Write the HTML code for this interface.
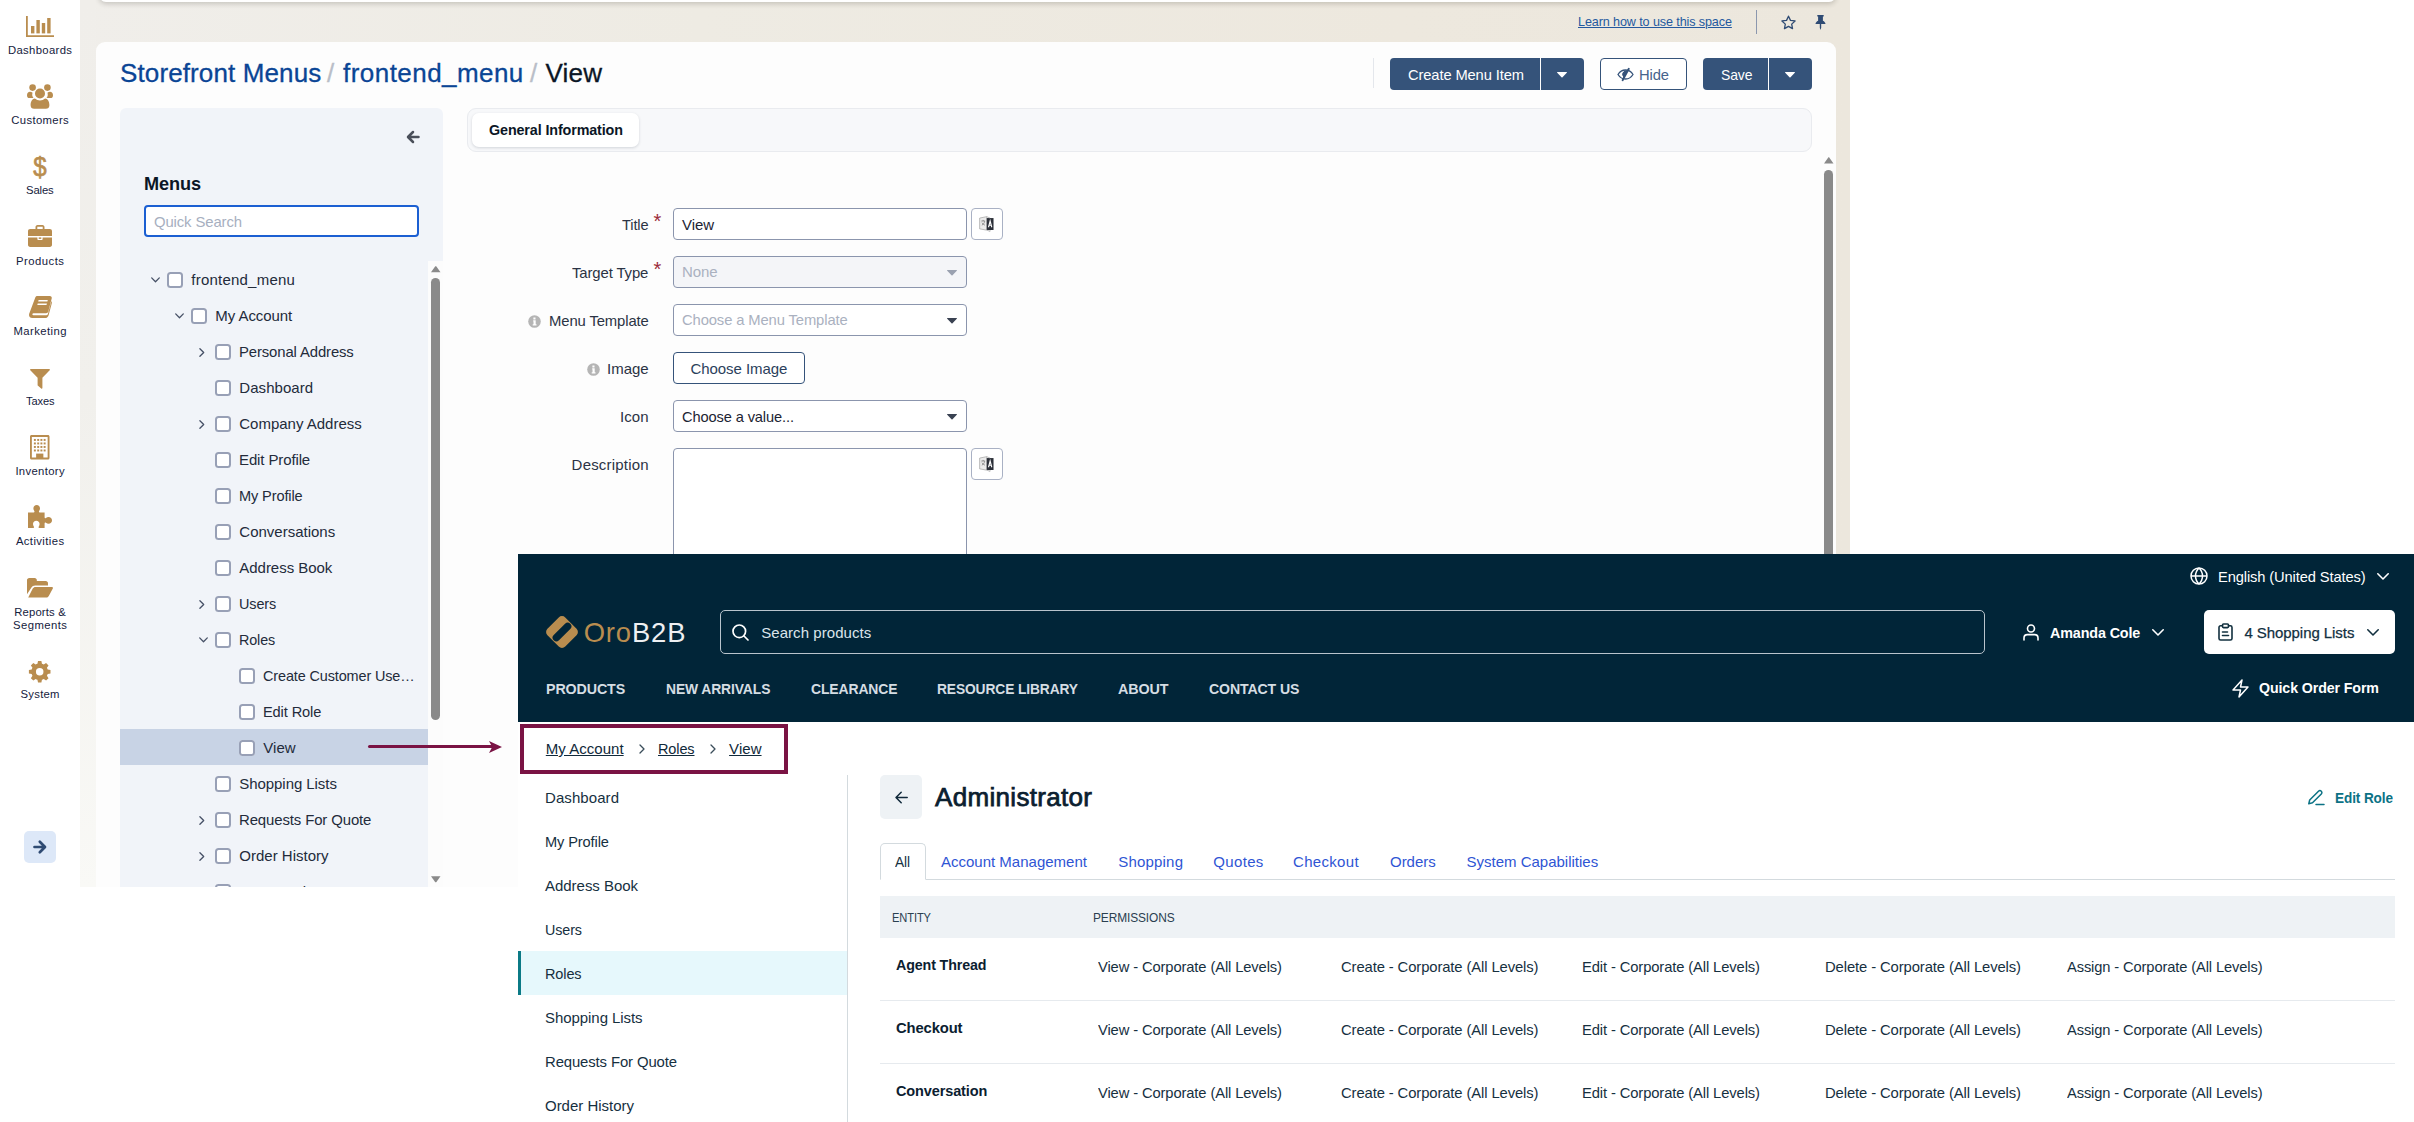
<!DOCTYPE html>
<html lang="en">
<head>
<meta charset="utf-8">
<title>Storefront Menus - frontend_menu - View</title>
<style>
*{box-sizing:border-box;margin:0;padding:0}
html,body{width:2414px;height:1122px;overflow:hidden;background:#fff}
body{position:relative;font-family:"Liberation Sans",sans-serif;color:#1c2433;font-size:15px}
.abs{position:absolute}
.t{position:absolute;white-space:nowrap;line-height:20px}
svg{position:absolute;overflow:visible}
#admin{position:absolute;left:0;top:0;width:1850px;height:887px;overflow:hidden;background:linear-gradient(90deg,#f0eeea 80px,#eeebe3 700px,#ede8de 1400px,#ece7dd 1850px)}
#side{position:absolute;left:0;top:0;width:80px;height:887px;background:#fff}
#side svg{fill:#b98d4f}
.lbl{position:absolute;white-space:nowrap;line-height:14px;color:#14213d}
#topbar{position:absolute;left:99px;top:-6px;width:1737px;height:8px;background:#fff;border-radius:0 0 7px 7px;box-shadow:0 2px 5px rgba(40,35,25,.2)}
#panel{position:absolute;left:96px;top:42px;width:1740px;height:860px;background:#fdfdfd;border-radius:9px 9px 0 0}
#edgegrad{position:absolute;left:80px;top:0;width:16px;height:887px;background:linear-gradient(180deg,#f0eeea 0%,#f1f0ec 45%,#f9f9f6 100%)}
.btn{position:absolute;top:58px;height:32px;background:#35537a}
.cb{position:absolute;width:16px;height:16px;border-radius:3.500px;background:#fff;box-shadow:inset 0 0 0 2px #98a0b6}
.chev{stroke:#465066;stroke-width:1.300;fill:none;stroke-linecap:round;stroke-linejoin:round}
.inp{position:absolute;left:673px;width:294px;height:32px;border:1px solid #8b95ad;border-radius:4px;background:#fff}
.tbtn{position:absolute;left:971px;width:32px;height:32px;border:1px solid #a9b1c4;border-radius:4px;background:#fff}
#store{position:absolute;left:518px;top:554px;width:1896px;height:568px;background:#fff;overflow:hidden}
#hdr{position:absolute;left:0;top:0;width:1896px;height:168px;background:#012538}
.sep{position:absolute;left:362px;width:1515px;height:1px;background:#e6eaee}
</style>
</head>
<body>
<div id="admin">
<div id="edgegrad"></div>
<div id="topbar"></div>
<div id="panel"></div>
<div class="t" style="left:1578px;top:12px;font-size:12.6px;color:#24599f;letter-spacing:-0.11px;text-decoration:underline;">Learn how to use this space</div>
<div class="abs" style="left:1756px;top:10px;width:1px;height:24px;background:#8b97ae"></div>
<svg style="left:1780.5px;top:14.5px;fill:none;stroke:#2f4b73;stroke-width:1.4;stroke-linejoin:round" width="15" height="14.5" viewBox="0 0 16 15"><path d="M8 1l2.100 4.500 4.900.6-3.600 3.400.9 4.800L8 11.900l-4.300 2.400.9-4.800L1 6.100l4.900-.6z"/></svg>
<svg style="left:1814.5px;top:15px;fill:#2f4b73" width="11" height="15" viewBox="0 0 11 15"><path d="M2.300 0h6.400v1.500H7.900v4.200c1.500.7 2.500 1.900 2.600 3.400H6.200v3.700L5.500 15l-.7-2.200V9.100H.5c.1-1.500 1.100-2.700 2.600-3.400V1.500H2.300z"/></svg>
<div class="t" style="left:120px;top:56px;font-size:26px;line-height:34px;-webkit-text-stroke:.3px"><span style="color:#0a4595;letter-spacing:.12px">Storefront Menus</span><span style="color:#b9bec8;margin:0 1.5px 0 -1.500px"> / </span><span style="color:#0a4595;letter-spacing:.45px">frontend_menu</span><span style="color:#b9bec8;margin:0 1px 0 -1px"> / </span><span style="color:#0b1626;letter-spacing:.2px">View</span></div>
<div class="abs" style="left:1373px;top:58px;width:1px;height:30px;background:#e4e7ec"></div>
<div class="btn" style="left:1390px;width:150px;border-radius:4px 0 0 4px"></div>
<div class="t" style="left:1408px;top:65px;font-size:14.8px;color:#fff;letter-spacing:-0.12px;transform:scaleX(0.9944);transform-origin:0 0;">Create Menu Item</div>
<div class="btn" style="left:1541px;width:43px;border-radius:0 4px 4px 0"></div>
<svg style="left:1557px;top:71.5px;fill:#fff" width="10" height="5.500" viewBox="0 0 10 5.500"><path d="M.5 0h9c.4 0 .6.500.3.800L5.500 5.300c-.3.300-.7.300-1 0L.2.800C-.1.500.1 0 .5 0z"/></svg>
<div class="abs" style="left:1600px;top:58px;width:87px;height:32px;border:1px solid #35537a;border-radius:4px;background:#fff"></div>
<svg style="left:1617px;top:68px;fill:none;stroke:#35537a;stroke-width:1.3;stroke-linecap:round" width="17" height="13" viewBox="0 0 17 13"><path d="M1 6.500c1.800-3 4.300-4.500 7.500-4.500S14.200 3.500 16 6.500c-1.800 3-4.300 4.500-7.500 4.500S2.800 9.500 1 6.500z"/><path d="M5.800 7c0-1.800 1.200-3 2.900-3.100"/><path d="M11.800.8 5.600 12.200" stroke-width="1.900"/><path d="M6.300 10.700 8 7.500l3-5.300-3.500.300-1.800 3z" fill="#35537a" stroke="none"/></svg>
<div class="t" style="left:1639px;top:65px;font-size:14.8px;color:#46638c;letter-spacing:-0.12px;transform:scaleX(0.9974);transform-origin:0 0;">Hide</div>
<div class="btn" style="left:1703px;width:65px;border-radius:4px 0 0 4px"></div>
<div class="t" style="left:1720.5px;top:65px;font-size:14.8px;color:#fff;letter-spacing:-0.12px;transform:scaleX(0.9439);transform-origin:0 0;">Save</div>
<div class="btn" style="left:1769px;width:43px;border-radius:0 4px 4px 0"></div>
<svg style="left:1785px;top:71.5px;fill:#fff" width="10" height="5.500" viewBox="0 0 10 5.500"><path d="M.5 0h9c.4 0 .6.500.3.800L5.500 5.300c-.3.300-.7.300-1 0L.2.800C-.1.500.1 0 .5 0z"/></svg>
<div class="abs" style="left:120px;top:108px;width:323px;height:790px;background:#f1f4f9;border-radius:6px 6px 0 0"></div>
<div class="abs" style="left:428px;top:261px;width:15px;height:640px;background:#fcfcfc"></div>
<svg style="left:405.500px;top:130px;fill:none;stroke:#4a4f5a;stroke-width:2.500;stroke-linecap:round;stroke-linejoin:round" width="14" height="14" viewBox="0 0 14 14"><path d="M12.500 7H3M7 2 2 7l5 5"/></svg>
<div class="t" style="left:144px;top:173px;font-size:18.5px;line-height:22px;font-weight:bold;color:#0b1626;letter-spacing:-0.12px;transform:scaleX(0.9809);transform-origin:0 0;font-weight:bold;">Menus</div>
<div class="abs" style="left:144px;top:205px;width:275px;height:32px;border:2px solid #1b5fd2;border-radius:4px;background:#fff"></div>
<div class="t" style="left:153.5px;top:212px;font-size:15px;color:#a7afbf;letter-spacing:-0.12px;transform:scaleX(0.9919);transform-origin:0 0;">Quick Search</div>
<svg class="chev" style="left:150.5px;top:277px" width="9" height="6" viewBox="0 0 9 6"><path d="M.7.900 4.500 4.700 8.300.900"/></svg>
<div class="cb" style="left:167px;top:272px"></div><div class="t" style="left:191.3px;top:270px;font-size:15px;color:#232b3b;letter-spacing:0.22px;">frontend_menu</div>
<svg class="chev" style="left:174.5px;top:313px" width="9" height="6" viewBox="0 0 9 6"><path d="M.7.900 4.500 4.700 8.300.900"/></svg>
<div class="cb" style="left:191px;top:308px"></div><div class="t" style="left:215.3px;top:306px;font-size:15px;color:#232b3b;letter-spacing:-0.06px;">My Account</div>
<svg class="chev" style="left:199px;top:347.5px" width="6" height="9" viewBox="0 0 6 9"><path d="M.9.700 4.700 4.500.900 8.300"/></svg>
<div class="cb" style="left:215px;top:344px"></div><div class="t" style="left:239.3px;top:342px;font-size:15px;color:#232b3b;letter-spacing:-0.12px;transform:scaleX(0.9916);transform-origin:0 0;">Personal Address</div>
<div class="cb" style="left:215px;top:380px"></div><div class="t" style="left:239.3px;top:378px;font-size:15px;color:#232b3b;letter-spacing:0.06px;">Dashboard</div>
<svg class="chev" style="left:199px;top:419.5px" width="6" height="9" viewBox="0 0 6 9"><path d="M.9.700 4.700 4.500.900 8.300"/></svg>
<div class="cb" style="left:215px;top:416px"></div><div class="t" style="left:239.3px;top:414px;font-size:15px;color:#232b3b;letter-spacing:-0.01px;">Company Address</div>
<div class="cb" style="left:215px;top:452px"></div><div class="t" style="left:239.3px;top:450px;font-size:15px;color:#232b3b;letter-spacing:-0.12px;transform:scaleX(0.9998);transform-origin:0 0;">Edit Profile</div>
<div class="cb" style="left:215px;top:488px"></div><div class="t" style="left:239.3px;top:486px;font-size:15px;color:#232b3b;letter-spacing:-0.12px;transform:scaleX(0.9710);transform-origin:0 0;">My Profile</div>
<div class="cb" style="left:215px;top:524px"></div><div class="t" style="left:239.3px;top:522px;font-size:15px;color:#232b3b;letter-spacing:0px;">Conversations</div>
<div class="cb" style="left:215px;top:560px"></div><div class="t" style="left:239.3px;top:558px;font-size:15px;color:#232b3b;letter-spacing:-0.03px;">Address Book</div>
<svg class="chev" style="left:199px;top:599.5px" width="6" height="9" viewBox="0 0 6 9"><path d="M.9.700 4.700 4.500.900 8.300"/></svg>
<div class="cb" style="left:215px;top:596px"></div><div class="t" style="left:239.3px;top:594px;font-size:15px;color:#232b3b;letter-spacing:-0.12px;transform:scaleX(0.9615);transform-origin:0 0;">Users</div>
<svg class="chev" style="left:198.5px;top:637px" width="9" height="6" viewBox="0 0 9 6"><path d="M.7.900 4.500 4.700 8.300.900"/></svg>
<div class="cb" style="left:215px;top:632px"></div><div class="t" style="left:239.3px;top:630px;font-size:15px;color:#232b3b;letter-spacing:-0.12px;transform:scaleX(0.9559);transform-origin:0 0;">Roles</div>
<div class="cb" style="left:239px;top:668px"></div><div class="t" style="left:263.3px;top:666px;font-size:15px;color:#232b3b;letter-spacing:-0.12px;transform:scaleX(0.9615);transform-origin:0 0;">Create Customer Use…</div>
<div class="cb" style="left:239px;top:704px"></div><div class="t" style="left:263.3px;top:702px;font-size:15px;color:#232b3b;letter-spacing:-0.12px;transform:scaleX(0.9732);transform-origin:0 0;">Edit Role</div>
<div class="abs" style="left:120px;top:729px;width:308px;height:36px;background:#c8d3e5"></div>
<div class="cb" style="left:239px;top:740px"></div><div class="t" style="left:263.3px;top:738px;font-size:15px;color:#232b3b;letter-spacing:0.02px;">View</div>
<div class="cb" style="left:215px;top:776px"></div><div class="t" style="left:239.3px;top:774px;font-size:15px;color:#232b3b;letter-spacing:-0.06px;">Shopping Lists</div>
<svg class="chev" style="left:199px;top:815.5px" width="6" height="9" viewBox="0 0 6 9"><path d="M.9.700 4.700 4.500.900 8.300"/></svg>
<div class="cb" style="left:215px;top:812px"></div><div class="t" style="left:239.3px;top:810px;font-size:15px;color:#232b3b;letter-spacing:-0.12px;transform:scaleX(0.9953);transform-origin:0 0;">Requests For Quote</div>
<svg class="chev" style="left:199px;top:851.5px" width="6" height="9" viewBox="0 0 6 9"><path d="M.9.700 4.700 4.500.900 8.300"/></svg>
<div class="cb" style="left:215px;top:848px"></div><div class="t" style="left:239.3px;top:846px;font-size:15px;color:#232b3b;letter-spacing:0px;">Order History</div>
<div class="cb" style="left:215px;top:884px"></div><div class="t" style="left:239.3px;top:882px;font-size:15px;color:#232b3b;letter-spacing:0.13px;">Open Orders</div>
<svg style="left:430.500px;top:266px;fill:#8a8a8a" width="9.500" height="7" viewBox="0 0 10 7"><path d="M5 0c.3 0 .5.100.7.400L10 6.500H0L4.300.4C4.500.1 4.700 0 5 0z"/></svg>
<div class="abs" style="left:431px;top:278px;width:9px;height:442px;border-radius:4.500px;background:#8a8a8a"></div>
<svg style="left:430.500px;top:876px;fill:#8a8a8a" width="9.500" height="7" viewBox="0 0 10 7"><path d="M0 0h10L5.700 6.100c-.4.500-1 .5-1.400 0z"/></svg>
<div class="abs" style="left:367.500px;top:745px;width:126px;height:3px;border-radius:1.500px;background:#7a1344"></div>
<svg style="left:488.500px;top:740.500px;fill:#7a1344" width="13" height="12" viewBox="0 0 13 12"><path d="M0 0 13 6 0 12 3.200 6z"/></svg>
<div class="abs" style="left:467px;top:108px;width:1345px;height:44px;border:1px solid #e9ebef;border-radius:9px;background:#f7f8fa"></div>
<div class="abs" style="left:472px;top:113px;width:167px;height:34px;border-radius:7px;background:#fff;box-shadow:0 1px 3px rgba(20,30,50,.16)"></div>
<div class="t" style="left:488.5px;top:120px;font-size:14.5px;font-weight:bold;color:#0b1626;letter-spacing:-0.12px;transform:scaleX(0.9881);transform-origin:0 0;">General Information</div>
<svg style="left:1823.500px;top:157px;fill:#8a8a8a" width="9.500" height="7.300" viewBox="0 0 10 7"><path d="M5 0c.3 0 .5.100.7.400L10 6.500H0L4.300.4C4.500.1 4.700 0 5 0z"/></svg>
<div class="abs" style="left:1824px;top:170px;width:9px;height:420px;border-radius:4.500px;background:#8a8a8a"></div>
<div class="t" style="left:622px;top:215px;font-size:15px;color:#2b3344;letter-spacing:-0.12px;transform:scaleX(0.9743);transform-origin:0 0;">Title</div>
<div class="abs" style="left:653.5px;top:211px;font-size:20px;line-height:20px;color:#9b2c3a">*</div>
<div class="inp" style="top:208px"></div>
<div class="t" style="left:682px;top:215px;font-size:15px;color:#1c2433;letter-spacing:-0.08px;">View</div>
<div class="tbtn" style="top:208px"></div>
<div class="t" style="left:572.2px;top:263px;font-size:15px;color:#2b3344;letter-spacing:-0.12px;transform:scaleX(0.9934);transform-origin:0 0;">Target Type</div>
<div class="abs" style="left:653.5px;top:259px;font-size:20px;line-height:20px;color:#9b2c3a">*</div>
<div class="inp" style="top:256px;background:#f4f5f8"></div>
<div class="t" style="left:682px;top:262px;font-size:15px;color:#aab1c0;letter-spacing:-0.12px;">None</div>
<svg style="left:946.500px;top:270.3px;fill:#9aa1b0" width="10" height="5.500" viewBox="0 0 10 5.500"><path d="M.5 0h9c.4 0 .6.500.3.800L5.500 5.300c-.3.300-.7.300-1 0L.2.800C-.1.500.1 0 .5 0z"/></svg>
<div class="t" style="left:548.8px;top:311px;font-size:15px;color:#2b3344;letter-spacing:-0.12px;transform:scaleX(0.9897);transform-origin:0 0;">Menu Template</div>
<div class="inp" style="top:304px"></div>
<div class="t" style="left:682px;top:310px;font-size:15px;color:#aab1c0;letter-spacing:-0.12px;transform:scaleX(0.9855);transform-origin:0 0;">Choose a Menu Template</div>
<svg style="left:946.500px;top:318.3px;fill:#3a4252" width="10" height="5.500" viewBox="0 0 10 5.500"><path d="M.5 0h9c.4 0 .6.500.3.800L5.500 5.300c-.3.300-.7.300-1 0L.2.800C-.1.500.1 0 .5 0z"/></svg>
<div class="t" style="left:607.1px;top:359px;font-size:15px;color:#2b3344;letter-spacing:-0.05px;">Image</div>
<div class="abs" style="left:673px;top:352px;width:132px;height:32px;border:1.500px solid #35537a;border-radius:4px;background:#fff"></div>
<div class="t" style="left:690.5px;top:359px;font-size:15px;color:#2b3f5c;letter-spacing:-0.07px;">Choose Image</div>
<div class="t" style="left:619.9px;top:407px;font-size:15px;color:#2b3344;letter-spacing:0.12px;">Icon</div>
<div class="inp" style="top:400px"></div>
<div class="t" style="left:682px;top:407px;font-size:15px;color:#1c2433;letter-spacing:-0.12px;transform:scaleX(0.9754);transform-origin:0 0;">Choose a value...</div>
<svg style="left:946.500px;top:414.3px;fill:#3a4252" width="10" height="5.500" viewBox="0 0 10 5.500"><path d="M.5 0h9c.4 0 .6.500.3.800L5.500 5.300c-.3.300-.7.300-1 0L.2.800C-.1.500.1 0 .5 0z"/></svg>
<div class="t" style="left:571.6px;top:455px;font-size:15px;color:#2b3344;letter-spacing:0.2px;">Description</div>
<div class="inp" style="top:448px;height:130px"></div>
<div class="tbtn" style="top:448px"></div>
<svg style="left:528px;top:314.5px" width="13" height="13" viewBox="0 0 13 13"><circle cx="6.500" cy="6.500" r="6.300" fill="#b5b5b5"/><path d="M5.200 5.300h2.500v4h.8v1.200H4.700V9.300h.8V6.500h-.3zM5.400 2.500h2.100v1.900H5.400z" fill="#fff"/></svg>
<svg style="left:586.5px;top:362.5px" width="13" height="13" viewBox="0 0 13 13"><circle cx="6.500" cy="6.500" r="6.300" fill="#b5b5b5"/><path d="M5.200 5.300h2.500v4h.8v1.200H4.700V9.300h.8V6.500h-.3zM5.400 2.500h2.100v1.900H5.400z" fill="#fff"/></svg>
<svg style="left:978.300px;top:215.3px" width="17.500" height="17.500" viewBox="0 0 16 16"><path d="M1.500 2.800 8 1.500v12.300l-6.500-1.100z" fill="#ececec" stroke="#9a9a9a" stroke-width=".6"/><path d="M8 2.800h6.200v10.900H8z" fill="#2b2f38"/><path d="M9.600 11.200 11.100 5.500l1.500 5.700M10.100 9.400h2" stroke="#fff" stroke-width="1" fill="none"/><path d="M3 5.500h3.500M4.700 4.500v1M3.500 9.300c1.500-.8 2.300-2 2.600-3.600M3.600 7c.6 1 1.500 1.800 2.700 2.300" stroke="#777" stroke-width=".7" fill="none"/><path d="M8 1.500l3 1.300M8 13.800l3 1.200V13.700" stroke="#9a9a9a" stroke-width=".6" fill="none"/></svg>
<svg style="left:978.300px;top:455.3px" width="17.500" height="17.500" viewBox="0 0 16 16"><path d="M1.500 2.800 8 1.500v12.300l-6.500-1.100z" fill="#ececec" stroke="#9a9a9a" stroke-width=".6"/><path d="M8 2.800h6.200v10.900H8z" fill="#2b2f38"/><path d="M9.600 11.200 11.100 5.500l1.500 5.700M10.100 9.400h2" stroke="#fff" stroke-width="1" fill="none"/><path d="M3 5.500h3.500M4.700 4.500v1M3.500 9.300c1.500-.8 2.300-2 2.600-3.600M3.600 7c.6 1 1.500 1.800 2.700 2.300" stroke="#777" stroke-width=".7" fill="none"/><path d="M8 1.500l3 1.300M8 13.800l3 1.200V13.700" stroke="#9a9a9a" stroke-width=".6" fill="none"/></svg>
<div id="side">
<!-- Dashboards: bar chart -->
    <svg style="left:26px;top:16px" width="28" height="22" viewBox="0 0 28 22"><path d="M0 0h1.8v19.2H28V21H0z"/><rect x="5" y="10" width="3.4" height="7.4"/><rect x="10.4" y="4" width="3.4" height="13.4"/><rect x="15.8" y="7" width="3.4" height="10.4"/><rect x="21.2" y="2" width="3.4" height="15.4"/></svg>
    <!-- Customers: users -->
    <svg style="left:27px;top:84px" width="26" height="25" viewBox="0 0 26 25"><circle cx="5.6" cy="3.6" r="3.3"/><circle cx="20.4" cy="3.6" r="3.3"/><path d="M0 11.2c0-2.2 1.2-3.4 3-3.4 1 0 1.7.3 2.6.9-.4 1-.5 2.3-.1 3.6.3.8.6 1.3 1 1.8H2.6C.9 14.100 0 13.200 0 11.200z"/><path d="M26 11.2c0-2.2-1.2-3.4-3-3.4-1 0-1.7.3-2.6.9.4 1 .5 2.3.1 3.600-.3.8-.6 1.300-1 1.800h3.9c1.700 0 2.600-.9 2.600-2.900z"/><circle cx="13" cy="9.500" r="5"/><path d="M3.600 21.200c0-3.800 1.700-6.300 4.300-6.600 1.500 1.200 3.200 1.900 5.100 1.900s3.600-.7 5.100-1.900c2.600.3 4.300 2.800 4.300 6.600 0 2.300-1.400 3.600-3.500 3.600H7.100c-2.100 0-3.500-1.300-3.500-3.600z"/></svg>
    <!-- Sales: dollar -->
    <div class="abs" style="left:20px;top:150.500px;width:40px;text-align:center;font-size:28px;line-height:32px;color:#b98d4f;-webkit-text-stroke:.7px #b98d4f;transform:scaleX(.86)">$</div>
    <!-- Products: briefcase -->
    <svg style="left:28px;top:225px" width="24" height="22" viewBox="0 0 24 22"><path d="M7.500 4V2.200C7.500 1 8.300 0 9.500 0h5c1.200 0 2 1 2 2.200V4h5.300C23.100 4 24 4.900 24 6.200V11H0V6.200C0 4.900.9 4 2.200 4zm1.800 0h5.400V1.800H9.300z"/><path d="M0 12.400h9.400v1.900c0 .5.300.8.800.8h3.600c.5 0 .8-.3.800-.8v-1.900H24v7.400c0 1.300-.9 2.200-2.200 2.200H2.200C.9 22 0 21.100 0 19.800z"/><rect x="10.700" y="12.400" width="2.600" height="1.500"/></svg>
    <!-- Marketing: book -->
    <svg style="left:29px;top:296px" width="23" height="22" viewBox="0 0 23 22"><path d="M6.200 1.700C6.500.6 7.300 0 8.400 0h12.300c1.500 0 2.400 1.100 2 2.600l-3.400 13c-.3 1.100-1.100 1.700-2.200 1.700H4.500c-.6 0-1 .3-1.100.800-.2.700.2 1.200 1 1.200h12.900c.8 0 1.300-.4 1.600-1.200L22.400 5c.5.600.6 1.300.4 2.200l-3.100 11.700c-.500 1.900-1.800 3.100-3.700 3.100H3.400C1 22-.4 20.100.100 17.900zM9.600 4.100l-.4 1.500h9.200l.4-1.500zm-.9 3.300-.4 1.500h9.200l.4-1.500z" fill-rule="evenodd"/></svg>
    <!-- Taxes: filter -->
    <svg style="left:30px;top:369px" width="20" height="20" viewBox="0 0 20 20"><path d="M.8 0h18.400c.7 0 1 .8.500 1.300L12.400 8.700V19c0 .7-.7 1-1.200.600L8 16.800c-.3-.2-.4-.5-.4-.8V8.700L.3 1.300C-.2.800.1 0 .8 0z"/></svg>
    <!-- Inventory: building -->
    <svg style="left:30px;top:435px" width="19.500" height="24.500" viewBox="0 0 20 25"><path fill-rule="evenodd" d="M1.600 0h16.800C19.300 0 20 .7 20 1.600v21.800c0 .9-.7 1.600-1.600 1.600H1.600C.7 25 0 24.300 0 23.400V1.600C0 .7.700 0 1.600 0zm.3 1.900v21.200h16.200V1.900z"/><rect x="6.300" y="19" width="7.400" height="5"/><rect x="4" y="4" width="2" height="2"/><rect x="7.4" y="4" width="2" height="2"/><rect x="10.7" y="4" width="2" height="2"/><rect x="14" y="4" width="2" height="2"/><rect x="4" y="7.6" width="2" height="2"/><rect x="7.4" y="7.6" width="2" height="2"/><rect x="10.7" y="7.6" width="2" height="2"/><rect x="14" y="7.6" width="2" height="2"/><rect x="4" y="11.2" width="2" height="2"/><rect x="7.4" y="11.2" width="2" height="2"/><rect x="10.7" y="11.2" width="2" height="2"/><rect x="14" y="11.2" width="2" height="2"/><rect x="4" y="14.8" width="2" height="2"/><rect x="7.4" y="14.8" width="2" height="2"/><rect x="10.7" y="14.8" width="2" height="2"/><rect x="14" y="14.8" width="2" height="2"/></svg>
    <!-- Activities: puzzle -->
    <svg style="left:28px;top:505px" width="24" height="23" viewBox="0 0 24 23"><path d="M0 7.400h5.600c.8 0 1.100-.5.700-1.300C5.700 5.200 5.400 4.400 5.400 3.500 5.400 1.500 6.800 0 8.700 0s3.300 1.500 3.300 3.500c0 .9-.3 1.700-.9 2.600-.4.800-.1 1.300.7 1.300h4.800v4.900c0 .8.500 1.100 1.300.7.900-.6 1.700-.9 2.600-.9 2 0 3.500 1.400 3.500 3.300s-1.500 3.300-3.500 3.300c-.9 0-1.700-.3-2.600-.9-.8-.4-1.300-.1-1.300.7V23h-5.200c-.8 0-1.100-.5-.7-1.300.6-.9.900-1.700.9-2.600 0-2-1.400-3.300-3.300-3.300S5 17.100 5 19.100c0 .9.300 1.700.9 2.600.4.800.1 1.300-.7 1.300H0z"/></svg>
    <!-- Reports: folder open -->
    <svg style="left:26.700px;top:578px" width="26" height="19.500" viewBox="0 0 28 21"><path d="M0 2.400C0 1 1 0 2.400 0h5.800c1.400 0 2.400 1 2.400 2.400v.8h9.600c1.400 0 2.400 1 2.400 2.400V8H8.800c-1.800 0-3.200.8-4.200 2.400L0 17.600z"/><path d="M6.200 11.400c.7-1.200 1.600-1.800 2.900-1.800h17.800c1 0 1.400.8.900 1.700l-4.200 7.700c-.7 1.300-1.700 2-3.100 2H1.300z"/></svg>
    <!-- System: cog -->
    <svg style="left:29.400px;top:660.500px" width="21.400" height="21.600" viewBox="0 0 22 23"><path fill-rule="evenodd" d="M9.200 0h3.600l.6 3c.7.200 1.300.5 1.900.8l2.500-1.700 2.600 2.600-1.700 2.500c.4.600.6 1.300.8 1.900l3 .6v3.600l-3 .6c-.2.700-.5 1.300-.8 1.900l1.700 2.500-2.600 2.600-2.500-1.700c-.6.400-1.300.6-1.900.8l-.6 3H9.200l-.6-3c-.7-.2-1.300-.5-1.900-.8l-2.500 1.700-2.600-2.600 1.700-2.500c-.4-.6-.6-1.300-.8-1.900l-3-.6V9.700l3-.6c.2-.7.5-1.300.8-1.900L1.600 4.700l2.600-2.600 2.500 1.700c.6-.4 1.300-.6 1.900-.8zM11 7.500a4 4 0 1 0 0 8 4 4 0 0 0 0-8z"/></svg>
<div class="lbl" style="left:8px;top:43px;font-size:11.3px;line-height:14px;letter-spacing:0.34px;">Dashboards</div>
<div class="lbl" style="left:11.3px;top:113px;font-size:11.3px;line-height:14px;letter-spacing:0.35px;">Customers</div>
<div class="lbl" style="left:26.15px;top:183px;font-size:11.3px;line-height:14px;letter-spacing:-0.12px;transform:scaleX(0.9969);transform-origin:0 0;">Sales</div>
<div class="lbl" style="left:16.05px;top:254px;font-size:11.3px;line-height:14px;letter-spacing:0.47px;">Products</div>
<div class="lbl" style="left:13.55px;top:324px;font-size:11.3px;line-height:14px;letter-spacing:0.41px;">Marketing</div>
<div class="lbl" style="left:25.75px;top:394px;font-size:11.3px;line-height:14px;letter-spacing:-0.12px;transform:scaleX(0.9814);transform-origin:0 0;">Taxes</div>
<div class="lbl" style="left:15.4px;top:464px;font-size:11.3px;line-height:14px;letter-spacing:0.34px;">Inventory</div>
<div class="lbl" style="left:15.9px;top:534px;font-size:11.3px;line-height:14px;letter-spacing:0.4px;">Activities</div>
<div class="lbl" style="left:14.2px;top:605px;font-size:11.3px;line-height:14px;letter-spacing:0.17px;">Reports &amp;</div>
<div class="lbl" style="left:13px;top:618px;font-size:11.3px;line-height:14px;letter-spacing:0.45px;">Segments</div>
<div class="lbl" style="left:20.5px;top:687px;font-size:11.3px;line-height:14px;letter-spacing:0.27px;">System</div>
<div class="abs" style="left:24px;top:831px;width:32px;height:32px;border-radius:5px;background:#dde8f8"></div>
<svg style="left:33px;top:840px;fill:none;stroke:#2f4b73;stroke-width:2.700;stroke-linecap:round;stroke-linejoin:round" width="14" height="14" viewBox="0 0 14 14"><path d="M1.500 7h10M6.800 1.800 12 7l-5.200 5.200"/></svg>
</div>
</div>
<div id="store">
<div id="hdr">
<svg style="left:1672px;top:13px;fill:none;stroke:#fff;stroke-width:1.500" width="18" height="18" viewBox="0 0 18 18"><circle cx="9" cy="9" r="8"/><path d="M1 9h16M9 1c2.400 2.300 3.500 5 3.500 8S11.400 14.700 9 17M9 1C6.600 3.300 5.500 6 5.500 9S6.600 14.700 9 17"/></svg>
<div class="t" style="left:1699.6px;top:13px;font-size:15px;color:#fff;letter-spacing:-0.12px;transform:scaleX(0.9790);transform-origin:0 0;">English (United States)</div>
<svg style="left:1859px;top:19px;fill:none;stroke:#fff;stroke-width:1.600;stroke-linecap:round;stroke-linejoin:round" width="12" height="7" viewBox="0 0 12 7"><path d="M.8.800 6 6 11.200.8"/></svg>
<svg style="left:26.9px;top:60.8px" width="34" height="34" viewBox="0 0 34 34"><g transform="rotate(45 17 17)"><rect x="4.400" y="4.400" width="25.200" height="25.200" rx="4.600" fill="#b98d4f"/><rect x="13.300" y="5.300" width="7.400" height="23.400" rx="3.700" fill="#012538"/></g></svg>
<div class="t" style="left:65.7px;top:62px;font-size:27.4px;line-height:34px;letter-spacing:0.87px;"><span style="color:#b98d4f">Oro</span><span style="color:#eef0f2">B2B</span></div>
<div class="abs" style="left:202px;top:56px;width:1265px;height:44px;border:1px solid #b9c4cc;border-radius:5px"></div>
<svg style="left:213.5px;top:69.5px;fill:none;stroke:#fff;stroke-width:1.700;stroke-linecap:round" width="17" height="17" viewBox="0 0 17 17"><circle cx="7.300" cy="7.300" r="6.300"/><path d="M12 12l4 4"/></svg>
<div class="t" style="left:243.2px;top:69px;font-size:15px;color:#dbe4ea;letter-spacing:0.06px;">Search products</div>
<svg style="left:1505px;top:69.5px;fill:none;stroke:#fff;stroke-width:1.600;stroke-linecap:round" width="16" height="17" viewBox="0 0 16 17"><circle cx="8" cy="4.500" r="3.500"/><path d="M1 16v-2c0-2 1.400-3.400 3.400-3.400h7.200c2 0 3.400 1.400 3.400 3.400v2"/></svg>
<div class="t" style="left:1531.7px;top:69px;font-size:15px;font-weight:bold;color:#fff;letter-spacing:-0.12px;transform:scaleX(0.9540);transform-origin:0 0;">Amanda Cole</div>
<svg style="left:1634.3px;top:75px;fill:none;stroke:#fff;stroke-width:1.600;stroke-linecap:round;stroke-linejoin:round" width="12" height="7" viewBox="0 0 12 7"><path d="M.8.800 6 6 11.200.8"/></svg>
<div class="abs" style="left:1686px;top:56px;width:191px;height:44px;border-radius:5px;background:#fff"></div>
<svg style="left:1700.3px;top:69px;fill:none;stroke:#12303f;stroke-width:1.600;stroke-linecap:round;stroke-linejoin:round" width="15" height="18" viewBox="0 0 15 18"><path d="M4.500 2.800H2.600c-.9 0-1.600.7-1.600 1.600v11c0 .9.700 1.600 1.600 1.600h9.800c.9 0 1.600-.7 1.600-1.600v-11c0-.9-.7-1.600-1.600-1.600h-1.900"/><rect x="4.500" y="1" width="6" height="3.600" rx="1"/><path d="M4.500 9h5M4.500 12.500h6"/></svg>
<div class="t" style="left:1726.4px;top:69px;font-size:15px;color:#12303f;letter-spacing:-0.06px;-webkit-text-stroke:.25px;">4 Shopping Lists</div>
<svg style="left:1849.3px;top:75px;fill:none;stroke:#12303f;stroke-width:1.600;stroke-linecap:round;stroke-linejoin:round" width="12" height="7" viewBox="0 0 12 7"><path d="M.8.800 6 6 11.200.8"/></svg>
<div class="t" style="left:28.2px;top:125px;font-size:15px;font-weight:bold;color:#d5dde3;letter-spacing:-0.12px;transform:scaleX(0.9504);transform-origin:0 0;">PRODUCTS</div>
<div class="t" style="left:147.8px;top:125px;font-size:15px;font-weight:bold;color:#d5dde3;letter-spacing:-0.12px;transform:scaleX(0.9252);transform-origin:0 0;">NEW ARRIVALS</div>
<div class="t" style="left:293px;top:125px;font-size:15px;font-weight:bold;color:#d5dde3;letter-spacing:-0.12px;transform:scaleX(0.9280);transform-origin:0 0;">CLEARANCE</div>
<div class="t" style="left:418.9px;top:125px;font-size:15px;font-weight:bold;color:#d5dde3;letter-spacing:-0.12px;transform:scaleX(0.9186);transform-origin:0 0;">RESOURCE LIBRARY</div>
<div class="t" style="left:600.2px;top:125px;font-size:15px;font-weight:bold;color:#d5dde3;letter-spacing:-0.12px;transform:scaleX(0.9556);transform-origin:0 0;">ABOUT</div>
<div class="t" style="left:690.6px;top:125px;font-size:15px;font-weight:bold;color:#d5dde3;letter-spacing:-0.12px;transform:scaleX(0.9403);transform-origin:0 0;">CONTACT US</div>
<svg style="left:1713.5px;top:124.5px;fill:none;stroke:#fff;stroke-width:1.500;stroke-linejoin:round;stroke-linecap:round" width="17" height="19" viewBox="0 0 17 19"><path d="M10 1 1 11h7.500L7 18l9-10H8.500z"/></svg>
<div class="t" style="left:1741px;top:124px;font-size:15px;font-weight:bold;color:#fff;letter-spacing:-0.12px;transform:scaleX(0.9481);transform-origin:0 0;">Quick Order Form</div>
</div>
<div class="abs" style="left:2px;top:170px;width:268px;height:50px;border:4px solid #7a1344;background:#fff"></div>
<div class="t" style="left:27.8px;top:185px;font-size:15px;color:#10293a;letter-spacing:0.03px;text-decoration:underline;">My Account</div>
<svg class="chev" style="left:120.5px;top:190px;stroke:#3a4d5a" width="6" height="10" viewBox="0 0 6 10"><path d="M1 1l4 4-4 4"/></svg>
<div class="t" style="left:140px;top:185px;font-size:15px;color:#10293a;letter-spacing:-0.12px;transform:scaleX(0.9665);transform-origin:0 0;text-decoration:underline;">Roles</div>
<svg class="chev" style="left:192px;top:190px;stroke:#3a4d5a" width="6" height="10" viewBox="0 0 6 10"><path d="M1 1l4 4-4 4"/></svg>
<div class="t" style="left:211.1px;top:185px;font-size:15px;color:#10293a;letter-spacing:0.05px;text-decoration:underline;">View</div>
<div class="abs" style="left:0;top:397px;width:329px;height:44px;background:#e6f8fc;border-left:3px solid #0b7a86"></div>
<div class="t" style="left:27px;top:234px;font-size:15px;color:#16303f;letter-spacing:0.08px;">Dashboard</div>
<div class="t" style="left:27px;top:278px;font-size:15px;color:#16303f;letter-spacing:-0.12px;transform:scaleX(0.9741);transform-origin:0 0;">My Profile</div>
<div class="t" style="left:27px;top:322px;font-size:15px;color:#16303f;letter-spacing:-0.03px;">Address Book</div>
<div class="t" style="left:27px;top:366px;font-size:15px;color:#16303f;letter-spacing:-0.12px;transform:scaleX(0.9563);transform-origin:0 0;">Users</div>
<div class="t" style="left:27px;top:410px;font-size:15px;color:#16303f;letter-spacing:-0.12px;transform:scaleX(0.9665);transform-origin:0 0;">Roles</div>
<div class="t" style="left:27px;top:454px;font-size:15px;color:#16303f;letter-spacing:-0.06px;">Shopping Lists</div>
<div class="t" style="left:27px;top:498px;font-size:15px;color:#16303f;letter-spacing:-0.12px;transform:scaleX(0.9923);transform-origin:0 0;">Requests For Quote</div>
<div class="t" style="left:27px;top:542px;font-size:15px;color:#16303f;letter-spacing:-0.02px;">Order History</div>
<div class="abs" style="left:329px;top:221px;width:1px;height:360px;background:#d3dade"></div>
<div class="abs" style="left:362px;top:221px;width:42px;height:44px;border-radius:5px;background:#eef2f5"></div>
<svg style="left:376.5px;top:236.8px;fill:none;stroke:#10293a;stroke-width:1.500;stroke-linecap:round;stroke-linejoin:round" width="13" height="13" viewBox="0 0 13 13"><path d="M12.200 6.500H1.200M6.200 1.300 1 6.500l5.200 5.200"/></svg>
<div class="t" style="left:417px;top:226px;font-size:26px;line-height:34px;color:#0b2030;letter-spacing:0.32px;-webkit-text-stroke:.75px #0b2030;">Administrator</div>
<svg style="left:1789.4px;top:234.5px;fill:none;stroke:#0b7285;stroke-width:1.500;stroke-linecap:round;stroke-linejoin:round" width="18" height="17" viewBox="0 0 18 17"><path d="M11.500 2.200c.8-.8 2-.8 2.800 0s.8 2 0 2.800L5.500 13.800 1.800 14.700l.9-3.700z"/><path d="M9 15.500h8"/></svg>
<div class="t" style="left:1816.6px;top:234px;font-size:15px;font-weight:bold;color:#0b7285;letter-spacing:-0.12px;transform:scaleX(0.9056);transform-origin:0 0;">Edit Role</div>
<div class="abs" style="left:362px;top:325px;width:1515px;height:1px;background:#d3dade"></div>
<div class="abs" style="left:362px;top:289px;width:46px;height:37px;border:1px solid #d3dade;border-bottom:1px solid #fff;border-radius:5px 5px 0 0;background:#fff"></div>
<div class="t" style="left:377.3px;top:298px;font-size:15px;color:#16303f;letter-spacing:-0.12px;transform:scaleX(0.9130);transform-origin:0 0;">All</div>
<div class="t" style="left:423px;top:298px;font-size:15px;color:#2f55d4;letter-spacing:0px;">Account Management</div>
<div class="t" style="left:600.2px;top:298px;font-size:15px;color:#2f55d4;letter-spacing:0.2px;">Shopping</div>
<div class="t" style="left:695.3px;top:298px;font-size:15px;color:#2f55d4;letter-spacing:0.33px;">Quotes</div>
<div class="t" style="left:775px;top:298px;font-size:15px;color:#2f55d4;letter-spacing:0.32px;">Checkout</div>
<div class="t" style="left:872px;top:298px;font-size:15px;color:#2f55d4;letter-spacing:-0.03px;">Orders</div>
<div class="t" style="left:948.6px;top:298px;font-size:15px;color:#2f55d4;letter-spacing:-0.01px;">System Capabilities</div>
<div class="abs" style="left:362px;top:342px;width:1515px;height:42px;background:#eef2f5"></div>
<div class="t" style="left:374px;top:354px;font-size:12.8px;color:#2a4050;letter-spacing:-0.12px;transform:scaleX(0.8684);transform-origin:0 0;">ENTITY</div>
<div class="t" style="left:574.5px;top:354px;font-size:12.8px;color:#2a4050;letter-spacing:-0.12px;transform:scaleX(0.9304);transform-origin:0 0;">PERMISSIONS</div>
<div class="t" style="left:378.1px;top:401px;font-size:15px;font-weight:bold;color:#0b2030;letter-spacing:-0.12px;transform:scaleX(0.9491);transform-origin:0 0;">Agent Thread</div>
<div class="t" style="left:580px;top:403px;font-size:15px;color:#16303f;letter-spacing:-0.12px;transform:scaleX(0.9825);transform-origin:0 0;">View - Corporate (All Levels)</div>
<div class="t" style="left:822.6px;top:403px;font-size:15px;color:#16303f;letter-spacing:-0.12px;transform:scaleX(0.9884);transform-origin:0 0;">Create - Corporate (All Levels)</div>
<div class="t" style="left:1064.4px;top:403px;font-size:15px;color:#16303f;letter-spacing:-0.12px;transform:scaleX(0.9841);transform-origin:0 0;">Edit - Corporate (All Levels)</div>
<div class="t" style="left:1306.7px;top:403px;font-size:15px;color:#16303f;letter-spacing:-0.12px;transform:scaleX(0.9892);transform-origin:0 0;">Delete - Corporate (All Levels)</div>
<div class="t" style="left:1549px;top:403px;font-size:15px;color:#16303f;letter-spacing:-0.12px;transform:scaleX(0.9789);transform-origin:0 0;">Assign - Corporate (All Levels)</div>
<div class="sep" style="top:446px"></div>
<div class="t" style="left:378.1px;top:464px;font-size:15px;font-weight:bold;color:#0b2030;letter-spacing:-0.12px;transform:scaleX(0.9851);transform-origin:0 0;">Checkout</div>
<div class="t" style="left:580px;top:466px;font-size:15px;color:#16303f;letter-spacing:-0.12px;transform:scaleX(0.9825);transform-origin:0 0;">View - Corporate (All Levels)</div>
<div class="t" style="left:822.6px;top:466px;font-size:15px;color:#16303f;letter-spacing:-0.12px;transform:scaleX(0.9884);transform-origin:0 0;">Create - Corporate (All Levels)</div>
<div class="t" style="left:1064.4px;top:466px;font-size:15px;color:#16303f;letter-spacing:-0.12px;transform:scaleX(0.9841);transform-origin:0 0;">Edit - Corporate (All Levels)</div>
<div class="t" style="left:1306.7px;top:466px;font-size:15px;color:#16303f;letter-spacing:-0.12px;transform:scaleX(0.9892);transform-origin:0 0;">Delete - Corporate (All Levels)</div>
<div class="t" style="left:1549px;top:466px;font-size:15px;color:#16303f;letter-spacing:-0.12px;transform:scaleX(0.9789);transform-origin:0 0;">Assign - Corporate (All Levels)</div>
<div class="sep" style="top:509px"></div>
<div class="t" style="left:378.1px;top:527px;font-size:15px;font-weight:bold;color:#0b2030;letter-spacing:-0.12px;transform:scaleX(0.9658);transform-origin:0 0;">Conversation</div>
<div class="t" style="left:580px;top:529px;font-size:15px;color:#16303f;letter-spacing:-0.12px;transform:scaleX(0.9825);transform-origin:0 0;">View - Corporate (All Levels)</div>
<div class="t" style="left:822.6px;top:529px;font-size:15px;color:#16303f;letter-spacing:-0.12px;transform:scaleX(0.9884);transform-origin:0 0;">Create - Corporate (All Levels)</div>
<div class="t" style="left:1064.4px;top:529px;font-size:15px;color:#16303f;letter-spacing:-0.12px;transform:scaleX(0.9841);transform-origin:0 0;">Edit - Corporate (All Levels)</div>
<div class="t" style="left:1306.7px;top:529px;font-size:15px;color:#16303f;letter-spacing:-0.12px;transform:scaleX(0.9892);transform-origin:0 0;">Delete - Corporate (All Levels)</div>
<div class="t" style="left:1549px;top:529px;font-size:15px;color:#16303f;letter-spacing:-0.12px;transform:scaleX(0.9789);transform-origin:0 0;">Assign - Corporate (All Levels)</div>
</div>
</body>
</html>
